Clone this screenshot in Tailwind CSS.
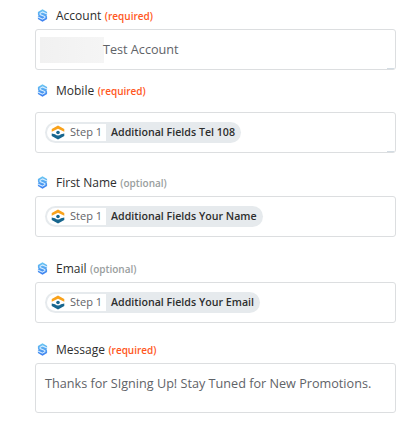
<!DOCTYPE html>
<html lang="en">

<head>
  <meta charset="UTF-8">
  <meta name="viewport" content="width=device-width, initial-scale=1.0">
  <title>Send SMS</title>
  <script src="https://cdn.jsdelivr.net/npm/@tailwindcss/browser@4"></script>
</head>

<body class="bg-white font-['Open_Sans',sans-serif] text-[#2d2e2e]">
  <!-- Shared icons -->
  <svg class="absolute size-0">
    <linearGradient id="blue" x1="0" y1="0" x2="0" y2="1">
      <stop offset="0" stop-color="#6cc8f2" />
      <stop offset="1" stop-color="#3a7cf0" />
    </linearGradient>
    <symbol id="app-icon" viewBox="0 0 12 14">
      <path d="M6 .3 11 3.2V5.8L10.4 6.9 11 8V10.7L6 13.7 1 10.7V8L1.6 6.9 1 5.8V3.2Z" fill="url(#blue)" />
      <path d="M11 5.4 6 3.1 3.4 4.6V6L8.6 8.2V9.5L6 11 1 8.6" fill="none" stroke="#d8eeff" stroke-width="1.1" />
    </symbol>
    <symbol id="step-icon" viewBox="0 0 14 16">
      <path d="M.3 7.2V4.2L7 .5 13.7 4.2V7.2L7 4.1Z" fill="#f9a21b" />
      <path d="M.3 9 3.8 9.8Q7 12.8 10.2 9.8L13.7 9V11.8L7 15.5.3 11.8Z" fill="#17668e" />
      <circle cx="7" cy="7.9" r="1.9" fill="#17668e" />
    </symbol>
  </svg>

  <main class="flex w-[361px] flex-col ml-[35px] pt-[6px]">
    <section>
      <label class="flex h-5 items-center text-[12px] font-medium">
        <svg class="ml-[2px] mr-[8px] mb-px h-[13px] w-[11px]"><use href="#app-icon" /></svg>
        Account <span class="ml-[3.5px] text-[10px] font-semibold text-[#ff5722]">(required)</span>
      </label>
      <div class="relative mt-[3px] flex h-[41px] items-center rounded-[3px] border border-[#dcdee0] pl-1 text-[12.65px] text-[#5f6368]">
        <span class="h-[26px] w-[64px] bg-gradient-to-r from-[#f1f1f1] to-[#f5f5f5]"></span><span class="-ml-px">Test Account</span>
        <span class="absolute right-px bottom-0 h-px w-[7px] bg-[#d3dce3]"></span>
      </div>
    </section>

    <section class="mt-[11px]">
      <label class="flex h-5 items-center text-[12px] font-medium">
        <svg class="ml-[2px] mr-[8px] mb-px h-[13px] w-[11px]"><use href="#app-icon" /></svg>
        Mobile <span class="ml-[3.5px] text-[10px] font-semibold text-[#ff5722]">(required)</span>
      </label>
      <div class="relative mt-[11px] flex h-[41px] items-center rounded-[3px] border border-[#dcdee0] pl-[9px]">
        <div class="flex h-[21px] w-[196px] items-center rounded-full bg-[#e6eaed] p-[2px] text-[11px]">
          <span class="flex h-[17px] w-[59px] items-center rounded-l-full bg-white pl-[4px] text-[#5f6368]">
            <svg class="mr-[5px] h-[15px] w-[14px]"><use href="#step-icon" /></svg>Step 1
          </span>
          <span class="ml-[5px] whitespace-nowrap text-[10.65px] font-semibold">Additional Fields Tel 108</span>
        </div>
        <span class="absolute right-px bottom-0 h-px w-[7px] bg-[#d3dce3]"></span>
      </div>
    </section>

    <section class="mt-[20px]">
      <label class="flex h-5 items-center text-[12px] font-medium">
        <svg class="ml-[2px] mr-[8px] mb-px h-[13px] w-[11px]"><use href="#app-icon" /></svg>
        First Name <span class="ml-[3.5px] text-[10px] font-semibold text-[#999e9e]">(optional)</span>
      </label>
      <div class="mt-[3px] flex h-[41px] items-center rounded-[3px] border border-[#dcdee0] pl-[9px]">
        <div class="flex h-[21px] w-[218px] items-center rounded-full bg-[#e6eaed] p-[2px] text-[11px]">
          <span class="flex h-[17px] w-[59px] items-center rounded-l-full bg-white pl-[4px] text-[#5f6368]">
            <svg class="mr-[5px] h-[15px] w-[14px]"><use href="#step-icon" /></svg>Step 1
          </span>
          <span class="ml-[5px] whitespace-nowrap text-[10.65px] font-semibold">Additional Fields Your Name</span>
        </div>
      </div>
    </section>

    <section class="mt-[22px]">
      <label class="flex h-5 items-center text-[12px] font-medium">
        <svg class="ml-[2px] mr-[8px] mb-px h-[13px] w-[11px]"><use href="#app-icon" /></svg>
        Email <span class="ml-[3.5px] text-[10px] font-semibold text-[#999e9e]">(optional)</span>
      </label>
      <div class="mt-[3px] flex h-[41px] items-center rounded-[3px] border border-[#dcdee0] pl-[9px]">
        <div class="flex h-[21px] w-[215px] items-center rounded-full bg-[#e6eaed] p-[2px] text-[11px]">
          <span class="flex h-[17px] w-[59px] items-center rounded-l-full bg-white pl-[4px] text-[#5f6368]">
            <svg class="mr-[5px] h-[15px] w-[14px]"><use href="#step-icon" /></svg>Step 1
          </span>
          <span class="ml-[5px] whitespace-nowrap text-[10.65px] font-semibold">Additional Fields Your Email</span>
        </div>
      </div>
    </section>

    <section class="mt-[17px]">
      <label class="flex h-5 items-center text-[12px] font-medium">
        <svg class="ml-[2px] mr-[8px] mb-px h-[13px] w-[11px]"><use href="#app-icon" /></svg>
        Message <span class="ml-[3.5px] text-[10px] font-semibold text-[#ff5722]">(required)</span>
      </label>
      <div class="mt-[3px] h-[50px] rounded-[3px] border border-[#dcdee0] pt-[9px] pl-[9px] text-[12.65px] leading-[20px] text-[#5f6368]">
        Thanks for SIgning Up! Stay Tuned for New Promotions.
      </div>
    </section>
  </main>
</body>

</html>
